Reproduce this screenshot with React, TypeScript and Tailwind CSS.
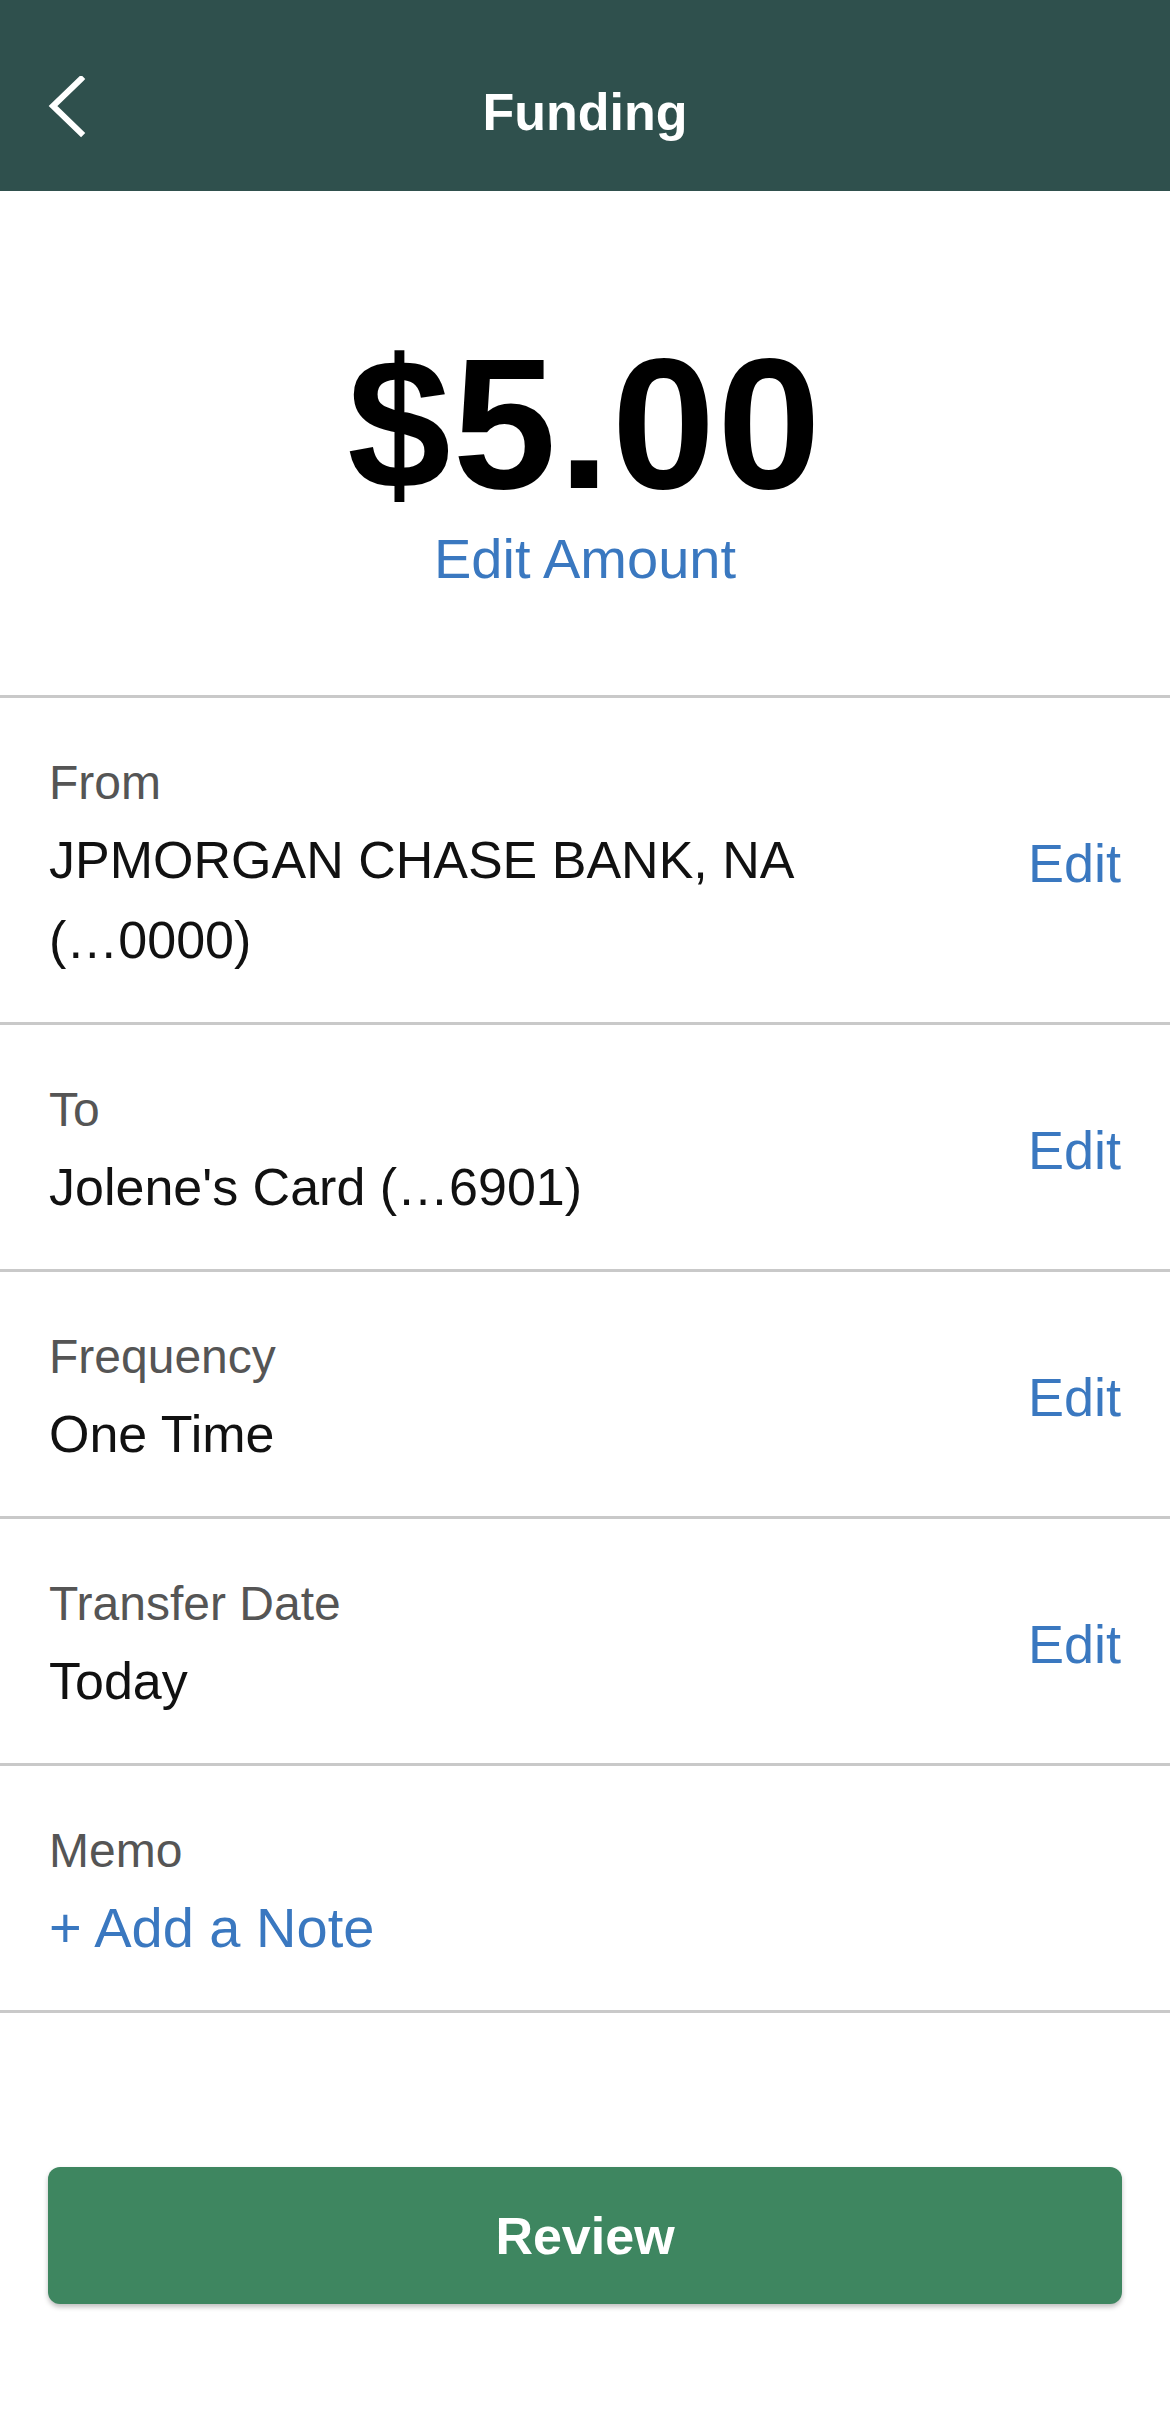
import React from 'react';

const rows = [
    { label: 'From', value: 'JPMORGAN CHASE BANK, NA', suffix: '(…0000)' },
    { label: 'To', value: "Jolene's Card", suffix: '(…6901)' },
    { label: 'Frequency', value: 'One Time', suffix: '' },
    { label: 'Transfer Date', value: 'Today', suffix: '' },
];

export default function App() {
    return (
        <div className="w-[1170px] min-h-[2412px] bg-white font-['Liberation_Sans',Arial,sans-serif]">
            <div className="relative flex h-[191px] items-center justify-center bg-[#2f504d] pt-[32px]">
                <div className="absolute left-[44px] top-[76px]">
                    <svg width="44" height="62" viewBox="0 0 44 62">
                        <path d="M37 3 L9 30 L37 57" fill="none" stroke="#fff" strokeWidth="6" strokeLinecap="square" />
                    </svg>
                </div>
                <div className="text-[52px] font-bold leading-none text-white">Funding</div>
            </div>

            <div className="flex flex-col items-center border-b-[3px] border-[#c9c9c9] pt-[140px] pb-[104px]">
                <div className="text-[186px] font-bold leading-none tracking-[2px] text-black">$5.00</div>
                <div className="mt-[10px] text-[56px] leading-[64px] text-[#3a78c0]">Edit Amount</div>
            </div>

            {rows.map((row) => (
                <div
                    key={row.label}
                    className="flex items-center justify-between border-b-[3px] border-[#c9c9c9] px-[49px] pt-[48px] pb-[42px]"
                >
                    <div className="flex max-w-[840px] flex-col">
                        <div className="text-[48px] leading-[74px] text-[#555555]">{row.label}</div>
                        <div className="text-[52px] leading-[80px] text-[#111111]">
                            {row.value}
                            {row.suffix && ' '}
                            {row.suffix && <span className="whitespace-nowrap">{row.suffix}</span>}
                        </div>
                    </div>
                    <div className="text-[54px] leading-[64px] text-[#3a78c0]">Edit</div>
                </div>
            ))}

            <div className="flex flex-col border-b-[3px] border-[#c9c9c9] px-[49px] pt-[48px] pb-[42px]">
                <div className="text-[48px] leading-[74px] text-[#555555]">Memo</div>
                <div className="text-[56px] leading-[80px] text-[#3a78c0]">+ Add a Note</div>
            </div>

            <div className="px-[48px] pt-[154px]">
                <div className="flex h-[137px] items-center justify-center rounded-[12px] bg-[#3e8660] shadow-[0_3px_5px_rgba(0,0,0,0.25)]">
                    <span className="text-[52px] font-bold text-white">Review</span>
                </div>
            </div>
        </div>
    );
}
